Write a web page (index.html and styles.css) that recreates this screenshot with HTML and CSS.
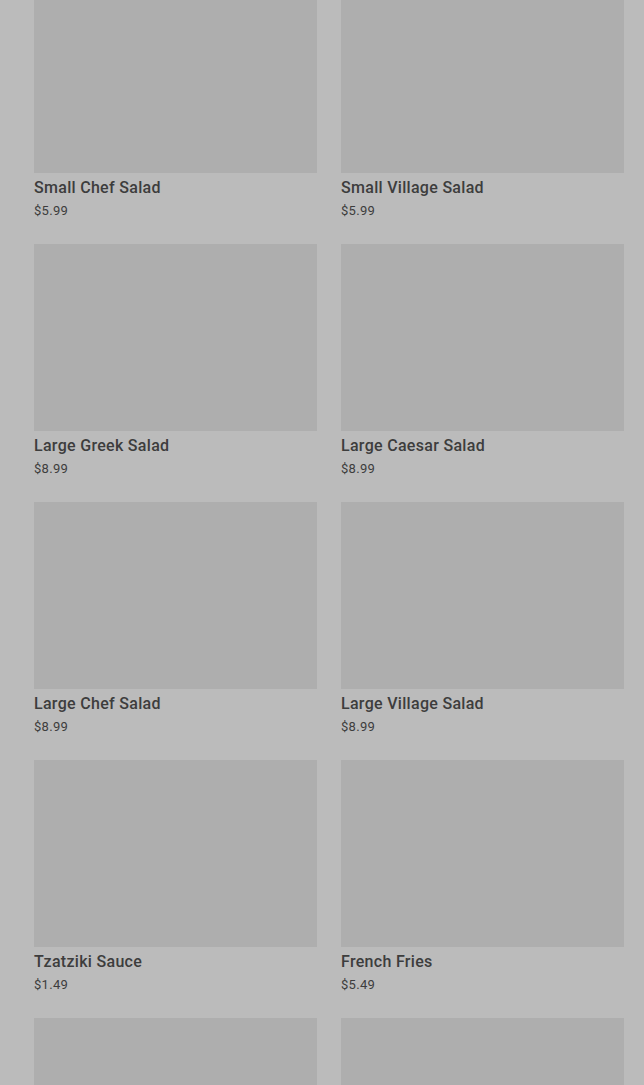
FILE: index.html
```html
<!DOCTYPE html>
<html lang="en">
<head>
    <meta charset="UTF-8">
    <meta name="viewport" content="width=device-width, initial-scale=1.0">
    <title>Menu</title>
    <link rel="stylesheet" href="styles.css">
</head>
<body>
    <main class="menu">
        <div class="item"><div class="photo"></div><h3>Small Chef Salad</h3><p>$5.99</p></div>
        <div class="item"><div class="photo"></div><h3>Small Village Salad</h3><p>$5.99</p></div>
        <div class="item"><div class="photo"></div><h3>Large Greek Salad</h3><p>$8.99</p></div>
        <div class="item"><div class="photo"></div><h3>Large Caesar Salad</h3><p>$8.99</p></div>
        <div class="item"><div class="photo"></div><h3>Large Chef Salad</h3><p>$8.99</p></div>
        <div class="item"><div class="photo"></div><h3>Large Village Salad</h3><p>$8.99</p></div>
        <div class="item"><div class="photo"></div><h3>Tzatziki Sauce</h3><p>$1.49</p></div>
        <div class="item"><div class="photo"></div><h3>French Fries</h3><p>$5.49</p></div>
        <div class="item"><div class="photo"></div></div>
        <div class="item"><div class="photo"></div></div>
    </main>
</body>
</html>
```

FILE: styles.css
```css
body{
    margin: 0;
    background-color: #bbbbbb;
    font-family: Roboto, "Liberation Sans", Arial, sans-serif;
    color: #3d3d3d;
    overflow: hidden;
}
.menu{
    display: grid;
    grid-template-columns: 283px 283px;
    column-gap: 24px;
    row-gap: 26px;
    padding: 0 20px 0 34px;
    margin-top: -14px;
}
.photo{
    height: 187px;
    background-color: #aeaeae;
}
.item h3{
    margin: 6px 0 0;
    font-size: 16px;
    font-weight: 500;
    line-height: 18px;
    letter-spacing: 0.3px;
}
.item p{
    margin: 6px 0 0;
    font-size: 13px;
    line-height: 15px;
    letter-spacing: 0.3px;
}
```
